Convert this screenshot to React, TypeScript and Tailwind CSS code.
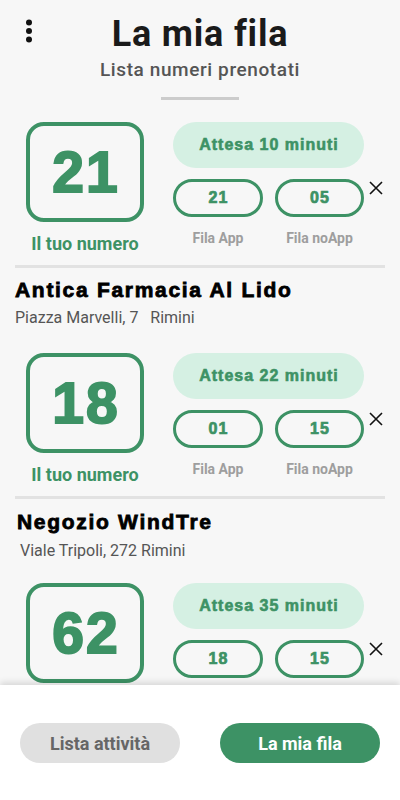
import React from "react";

type CardProps = { n: string; wait: string; app: string; noapp: string };

function CloseIcon() {
  return (
    <svg width="14" height="14" viewBox="0 0 14 14" fill="none">
      <path d="M1 1 L13 13 M13 1 L1 13" stroke="#111" strokeWidth="1.6" />
    </svg>
  );
}

function Card({ n, wait, app, noapp }: CardProps) {
  return (
    <div className="flex items-start pl-[26px]">
      <div className="flex w-[118px] flex-col items-center">
        <div className="flex h-[100px] w-[118px] items-center justify-center rounded-[18px] border-[4px] border-[#3d9265]">
          <span className="pl-[2px] font-['Liberation_Sans',Arial,sans-serif] text-[57px] font-bold leading-none tracking-[2px] text-[#3d9265] [-webkit-text-stroke:2px_#3d9265]">
            {n}
          </span>
        </div>
        <div className="mt-[12px] font-['Roboto',sans-serif] text-[18px] font-bold leading-[20px] text-[#3d9265]">
          Il tuo numero
        </div>
      </div>
      <div className="ml-[29px] flex w-[191px] flex-col">
        <div className="flex h-[46px] items-center justify-center rounded-full bg-[#d5f0e3] pl-[1px] font-['Liberation_Sans',Arial,sans-serif] text-[16px] font-bold tracking-[1px] text-[#3d9265] [-webkit-text-stroke:0.6px_#3d9265]">
          Attesa {wait} minuti
        </div>
        <div className="mt-[11px] grid grid-cols-[90px_89px] gap-[12px]">
          <div className="flex h-[38px] items-center justify-center rounded-full border-[3px] border-[#3d9265] pl-[1px] font-['Liberation_Sans',Arial,sans-serif] text-[16px] font-bold tracking-[1px] text-[#3d9265] [-webkit-text-stroke:0.7px_#3d9265]">
            {app}
          </div>
          <div className="flex h-[38px] items-center justify-center rounded-full border-[3px] border-[#3d9265] pl-[1px] font-['Liberation_Sans',Arial,sans-serif] text-[16px] font-bold tracking-[1px] text-[#3d9265] [-webkit-text-stroke:0.7px_#3d9265]">
            {noapp}
          </div>
        </div>
        <div className="mt-[13px] grid grid-cols-[90px_89px] gap-[12px] font-['Roboto',sans-serif] text-[14px] font-bold leading-[16px] text-[#9e9e9e]">
          <div className="text-center">Fila App</div>
          <div className="text-center">Fila noApp</div>
        </div>
      </div>
      <div className="ml-[5px] pt-[59px]">
        <CloseIcon />
      </div>
    </div>
  );
}

function Shop({ name, address, nameClass, addrClass }: { name: string; address: string; nameClass: string; addrClass: string }) {
  return (
    <div className="flex flex-col">
      <div className={"font-['Liberation_Sans',Arial,sans-serif] text-[21px] font-bold leading-[24px] tracking-[1.7px] text-black [-webkit-text-stroke:0.8px_#000] " + nameClass}>
        {name}
      </div>
      <div className={"font-['Roboto',sans-serif] text-[16px] leading-[18px] text-[#555] whitespace-pre " + addrClass}>
        {address}
      </div>
    </div>
  );
}

export default function App() {
  return (
    <div className="flex h-[800px] w-[400px] flex-col overflow-hidden bg-[#f7f7f7]">
      <div className="flex-1 overflow-hidden">
        <div className="grid grid-cols-[56px_1fr_56px] pt-[14px]">
          <div className="flex justify-center pl-[2px] pt-[5px]">
            <svg width="8" height="24" viewBox="0 0 8 24">
              <circle cx="4" cy="3.5" r="3" fill="#111" />
              <circle cx="4" cy="12" r="3" fill="#111" />
              <circle cx="4" cy="20.5" r="3" fill="#111" />
            </svg>
          </div>
          <div className="flex flex-col items-center">
            <div className="font-['Roboto',sans-serif] text-[36px] font-bold leading-[40px] tracking-[0.8px] text-[#1a1a1a]">La mia fila</div>
            <div className="mt-[5px] font-['Roboto',sans-serif] text-[19px] font-medium leading-[22px] tracking-[0.6px] text-[#555]">
              Lista numeri prenotati
            </div>
            <div className="mt-[16px] h-[3px] w-[78px] bg-[#cccccc]" />
          </div>
          <div />
        </div>

        <div className="mt-[22px]">
          <Card n="21" wait="10" app="21" noapp="05" />
        </div>
        <div className="mx-[15px] mt-[11px] h-[3px] bg-[#e2e2e2]" />
        <div className="mt-[10px] px-[15px]">
          <Shop name="Antica Farmacia Al Lido" address={"Piazza Marvelli, 7   Rimini"} nameClass="" addrClass="mt-[7px]" />
        </div>

        <div className="mt-[26px]">
          <Card n="18" wait="22" app="01" noapp="15" />
        </div>
        <div className="mx-[15px] mt-[11px] h-[3px] bg-[#e2e2e2]" />
        <div className="mt-[11px] px-[15px]">
          <Shop name="Negozio WindTre" address="Viale Tripoli, 272 Rimini" nameClass="pl-[2px]" addrClass="mt-[8px] pl-[5px]" />
        </div>

        <div className="mt-[23px]">
          <Card n="62" wait="35" app="18" noapp="15" />
        </div>
      </div>

      <div className="relative z-10 flex h-[115px] shrink-0 items-start justify-between bg-white px-[20px] pt-[38px] shadow-[0_-3px_6px_rgba(0,0,0,0.12)]">
        <div className="flex h-[40px] w-[160px] items-center justify-center rounded-full bg-[#e0e0e0] font-['Roboto',sans-serif] text-[18px] font-bold text-[#666]">
          Lista attività
        </div>
        <div className="flex h-[40px] w-[160px] items-center justify-center rounded-full bg-[#3d9265] font-['Roboto',sans-serif] text-[18px] font-bold text-white">
          La mia fila
        </div>
      </div>
    </div>
  );
}
